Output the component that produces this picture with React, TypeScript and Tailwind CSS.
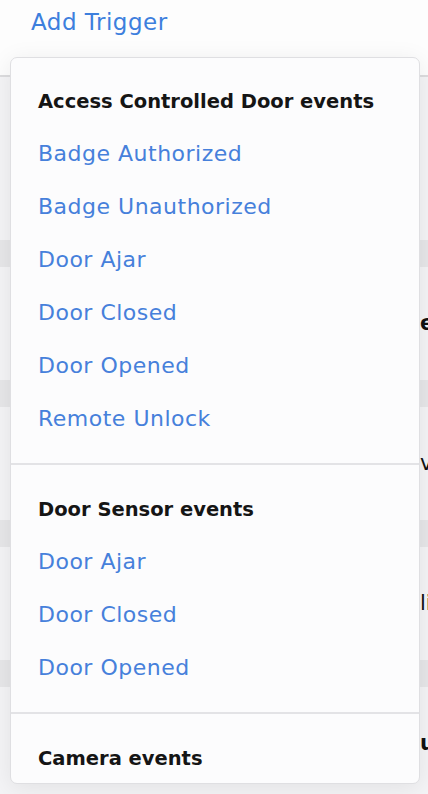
import React from "react";

type Section = { title: string; items: string[] };

const SECTIONS: Section[] = [
  {
    title: "Access Controlled Door events",
    items: ["Badge Authorized", "Badge Unauthorized", "Door Ajar", "Door Closed", "Door Opened", "Remote Unlock"],
  },
  { title: "Door Sensor events", items: ["Door Ajar", "Door Closed", "Door Opened"] },
  { title: "Camera events", items: ["Motion Detected", "Person Detected"] },
];

// rows of the trigger list that sit behind the open menu
const BACK_ROWS = [
  { text: "e", bold: true },
  { text: "v", bold: false },
  { text: "li", bold: false },
  { text: "u", bold: true },
];

export default function App() {
  return (
    <div
      className="relative h-[794px] w-[428px] overflow-hidden bg-[#f4f4f6]"
      style={{ fontFamily: "'DejaVu Sans', Lato, sans-serif" }}
    >
      {/* Page header */}
      <div className="h-[75px] bg-[#fdfdfd] pl-[31px] pt-[5px]">
        <button className="text-[23px] leading-[34px] tracking-[0.5px] text-[#3d7fdd]">Add Trigger</button>
      </div>
      <div className="h-[2px] bg-[#dcdcde]" />

      {/* Existing trigger rows */}
      <div className="h-[163px]" />
      {BACK_ROWS.map((r, i) => (
        <div key={i}>
          <div className="h-[27px] bg-[#e7e7e9]" />
          <div className="flex h-[113px] items-center">
            <span
              className={`whitespace-nowrap pl-[420px] text-[21px] text-[#111] ${r.bold ? "font-bold" : ""}`}
            >
              {r.text}
            </span>
          </div>
        </div>
      ))}

      {/* Dropdown menu */}
      <div className="absolute left-[10px] top-[57px] h-[727px] w-[410px] overflow-hidden rounded-[7px] border border-[#dfdfe2] bg-[#fcfcfd] shadow-[0_4px_24px_rgba(0,0,0,0.08)]">
        {SECTIONS.map((s, i) => (
          <div
            key={s.title}
            className={i > 0 ? "border-t-2 border-[#e3e3e6] pt-[18px] pb-[17px]" : "py-[17px]"}
          >
            <div className="flex h-[53px] items-center px-[27px] text-[19.5px] font-bold text-[#151515]">
              {s.title}
            </div>
            {s.items.map((it) => (
              <div
                key={it}
                className="flex h-[53px] items-center px-[27px] pb-[2px] text-[22px] tracking-[0.5px] text-[#4680db]"
              >
                {it}
              </div>
            ))}
          </div>
        ))}
      </div>
    </div>
  );
}
